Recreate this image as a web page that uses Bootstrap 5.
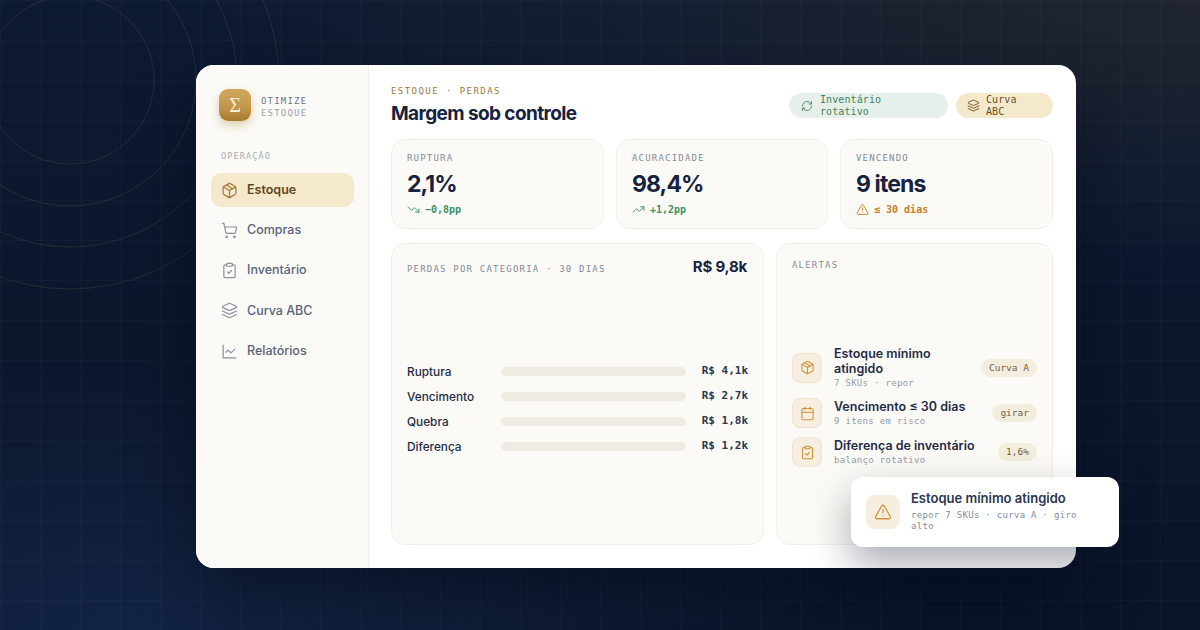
<!DOCTYPE html>
<html lang="pt-BR">
<head>
  <meta charset="UTF-8">
  <title>Otimize Estoque</title>
  <link rel="stylesheet" href="https://cdn.jsdelivr.net/npm/bootstrap@5.3.0/dist/css/bootstrap.min.css">
  <style>
    body {
      width: 1200px; height: 630px; overflow: hidden; position: relative;
      font-family: Inter, "Liberation Sans", sans-serif; color: #16233f;
      background-color: #0b1630;
      background-image:
        linear-gradient(rgba(255,255,255,.022) 1px, transparent 1px),
        linear-gradient(90deg, rgba(255,255,255,.022) 1px, transparent 1px),
        radial-gradient(1000px 260px at 100% 0, #20252f 0%, rgba(32,37,47,0) 100%),
        radial-gradient(800px 280px at 12% 100%, #122444 0%, rgba(18,36,68,0) 100%),
        linear-gradient(180deg, #0d1a33 0%, #0b1429 100%);
      background-size: 40px 40px, 40px 40px, auto, auto, auto;
    }
    .mono { font-family: "DejaVu Sans Mono", "Liberation Mono", monospace; }
    .rings { position: absolute; left: 0; top: 0; }
    .shell {
      position: relative; width: 880px; height: 503px; margin: 65px 0 0 196px;
      border-radius: 18px; background: #fff; box-shadow: 0 30px 70px rgba(3,8,20,.45);
    }
    .side { width: 173px; background: #fbfaf6; border-right: 1px solid #f3efe6; border-radius: 18px 0 0 18px; padding: 24px 14px 0 15px; }
    .brand-mark {
      width: 32px; height: 32px; border-radius: 9px; margin-left: 8px;
      background: linear-gradient(180deg, #d0a85c 0%, #c2964a 60%, #a67a2d 100%);
      box-shadow: 0 4px 10px rgba(166,122,45,.35);
      color: #fbf3dc; font: 20px/32px "Liberation Serif", serif; text-align: center;
    }
    .brand-text { font-size: 9px; line-height: 12px; letter-spacing: 1.2px; color: #6b7488; margin-left: 10px; padding-top: 3px; }
    .brand-text span { color: #9aa1af; display: block; }
    .side-label { font-size: 8.5px; letter-spacing: 1.15px; color: #a9adb5; margin: 30px 0 12px 10px; line-height: 10px; }
    .side .nav { gap: 6.3px; }
    .side .nav-link {
      display: flex; align-items: center; gap: 9px; height: 34px; padding: 0 10px; border-radius: 10px;
      font-size: 12.5px; font-weight: 500; color: #5a6478;
    }
    .side .nav-link.active { background: #f5e9cd; color: #5f4520; font-weight: 600; }
    .side .nav-link svg { width: 17px; height: 17px; color: #8b92a1; }
    .side .nav-link.active svg { color: #a0793a; }
    .ico { fill: none; stroke: currentColor; stroke-width: 1.7; stroke-linecap: round; stroke-linejoin: round; flex: none; }
    .board { padding: 20px 23px 23px 22px; min-width: 0; }
    .eyebrow { font-size: 9px; letter-spacing: 1.45px; color: #9a7a3e; line-height: 11px; padding-top: 1px; }
    .headline { font-size: 19px; font-weight: 700; letter-spacing: -.6px; line-height: 24px; margin: 5px 0 0; color: #16233f; }
    .chip {
      display: flex; align-items: center; height: 25px; border-radius: 13px;
      font-size: 10px; line-height: 11.5px; letter-spacing: .1px; font-weight: 400; white-space: normal; text-align: left;
    }
    .chip-green { width: 159px; gap: 7px; padding: 0 12px; background: #e7efea; color: #3b8560; }
    .chip-green svg { width: 12px; height: 12px; }
    .chip-gold { width: 97px; gap: 6px; padding: 0 20px 0 11px; background: #f5e9cd; color: #6a4e20; }
    .chip-gold svg { width: 13px; height: 13px; }
    .tile { background: #fbfaf6; border: 1px solid #f3efe6; border-radius: 14px; }
    .kpis { display: grid; grid-template-columns: 213px 212px 213px; gap: 12px; margin-top: 13px; }
    .kpi { height: 90px; padding: 13px 15px; }
    .tile-label { font-size: 9px; line-height: 11px; letter-spacing: 1.2px; color: #838a99; }
    .kpi-value { font-size: 23px; font-weight: 700; letter-spacing: -.9px; line-height: 30px; margin-top: 5px; color: #16233f; }
    .kpi-delta { display: flex; align-items: center; gap: 5px; font-size: 10px; line-height: 12px; font-weight: 700; margin-top: 4px; }
    .kpi-delta svg { width: 13px; height: 13px; }
    .good { color: #3c9163; }
    .warn { color: #c67f24; }
    .panels { display: grid; grid-template-columns: 373px 277px; gap: 12px; margin-top: 14px; }
    .panel { height: 302px; padding: 16px 15px; position: relative; }
    .panel-head { margin-top: -2px; }
    .panel-head .tile-label { padding-top: 4px; }
    .panel-total { font-size: 15px; font-weight: 700; letter-spacing: -.2px; line-height: 18px; color: #16233f; margin-right: 1px; }
    .loss-rows { margin-top: 88px; display: flex; flex-direction: column; gap: 7px; }
    .loss-row { display: flex; align-items: center; height: 18px; font-size: 11.8px; font-weight: 500; color: #1f2c47; }
    .loss-name { width: 94px; }
    .track { width: 185px; height: 9px; border-radius: 5px; background: #efece4; margin-bottom: 3px; }
    .loss-val { margin-left: auto; margin-bottom: 3px; font-size: 11px; font-weight: 700; color: #2a3650; }
    .alert-list { margin-top: 75px; display: flex; flex-direction: column; gap: 9px; }
    .alert-row { display: flex; align-items: center; gap: 12px; }
    .alert-ico {
      width: 30px; height: 30px; border-radius: 8px; background: #f6efe0; border: 1px solid #f0e3cb; color: #d0923a;
      display: flex; align-items: center; justify-content: center; flex: none;
    }
    .alert-ico svg { width: 15px; height: 15px; }
    .alert-title { font-size: 12.5px; font-weight: 600; line-height: 15px; color: #1f2c47; }
    .alert-sub { font-size: 9px; line-height: 12px; letter-spacing: .3px; color: #969ba6; margin-top: 1px; }
    .tag {
      margin-left: auto; flex: none; background: #f3eddd; color: #6e6245; border-radius: 10px; height: 18px; padding: 0 8px;
      font-size: 9.5px; line-height: 18px; font-weight: 400;
    }
    .notice {
      position: absolute; left: 655px; top: 412px; width: 268px; height: 70px; border-radius: 12px; background: #fff;
      display: flex; align-items: center; gap: 11px; padding: 0 15px 2px;
      box-shadow: 0 18px 40px rgba(10,20,40,.35);
    }
    .notice-ico { width: 34px; height: 34px; border-radius: 9px; background: #f6efe0; color: #d0923a; display: flex; align-items: center; justify-content: center; flex: none; margin-top: 2px; }
    .notice-ico svg { width: 18px; height: 18px; }
    .notice-title { font-size: 13px; font-weight: 600; line-height: 15px; color: #2a3650; }
    .notice-sub { font-size: 9px; line-height: 10.5px; letter-spacing: .3px; color: #858b98; margin-top: 4px; }
  </style>
</head>
<body>
  <svg width="0" height="0" class="position-absolute">
    <symbol id="i-box" viewBox="0 0 24 24"><path d="M21 8a2 2 0 0 0-1-1.73l-7-4a2 2 0 0 0-2 0l-7 4A2 2 0 0 0 3 8v8a2 2 0 0 0 1 1.73l7 4a2 2 0 0 0 2 0l7-4A2 2 0 0 0 21 16Z"/><path d="m3.3 7 8.7 5 8.7-5"/><path d="M12 22V12"/><path d="m7.5 4.3 9 5.2"/></symbol>
    <symbol id="i-cart" viewBox="0 0 24 24"><circle cx="8" cy="21" r="1"/><circle cx="19" cy="21" r="1"/><path d="M2.05 2.05h2l2.66 12.42a2 2 0 0 0 2 1.58h9.78a2 2 0 0 0 1.95-1.57l1.65-7.43H5.12"/></symbol>
    <symbol id="i-check" viewBox="0 0 24 24"><rect x="8" y="2" width="8" height="4" rx="1"/><path d="M16 4h2a2 2 0 0 1 2 2v14a2 2 0 0 1-2 2H6a2 2 0 0 1-2-2V6a2 2 0 0 1 2-2h2"/><path d="m9 14 2 2 4-4"/></symbol>
    <symbol id="i-layers" viewBox="0 0 24 24"><path d="M12.83 2.18a2 2 0 0 0-1.66 0L2.6 6.08a1 1 0 0 0 0 1.83l8.58 3.91a2 2 0 0 0 1.66 0l8.58-3.9a1 1 0 0 0 0-1.83Z"/><path d="m22 17.65-9.17 4.16a2 2 0 0 1-1.66 0L2 17.65"/><path d="m22 12.65-9.17 4.16a2 2 0 0 1-1.66 0L2 12.65"/></symbol>
    <symbol id="i-chart" viewBox="0 0 24 24"><path d="M3 3v18h18"/><path d="m19 9-5 5-4-4-3 3"/></symbol>
    <symbol id="i-sync" viewBox="0 0 24 24"><path d="M3 12a9 9 0 0 1 9-9 9.75 9.75 0 0 1 6.74 2.74L21 8"/><path d="M21 3v5h-5"/><path d="M21 12a9 9 0 0 1-9 9 9.75 9.75 0 0 1-6.74-2.74L3 16"/><path d="M8 16H3v5"/></symbol>
    <symbol id="i-down" viewBox="0 0 24 24"><path d="m22 17-8.5-8.5-5 5L2 7"/><path d="M16 17h6v-6"/></symbol>
    <symbol id="i-up" viewBox="0 0 24 24"><path d="m22 7-8.5 8.5-5-5L2 17"/><path d="M16 7h6v6"/></symbol>
    <symbol id="i-warn" viewBox="0 0 24 24"><path d="m21.73 18-8-14a2 2 0 0 0-3.48 0l-8 14A2 2 0 0 0 4 21h16a2 2 0 0 0 1.73-3"/><path d="M12 9v4"/><path d="M12 17h.01"/></symbol>
    <symbol id="i-cal" viewBox="0 0 24 24"><rect x="3" y="4" width="18" height="18" rx="2"/><path d="M16 2v4"/><path d="M8 2v4"/><path d="M3 10h18"/></symbol>
  </svg>

  <!-- aneis decorativos do fundo -->
  <svg class="rings" width="400" height="400" fill="none" stroke="#d8a84a" stroke-opacity=".13">
    <circle cx="70" cy="80" r="84"/>
    <circle cx="70" cy="80" r="126"/>
    <circle cx="70" cy="80" r="167"/>
    <circle cx="70" cy="80" r="209"/>
  </svg>

  <div class="shell d-flex">
    <aside class="side flex-shrink-0">
      <div class="d-flex align-items-center">
        <div class="brand-mark">Σ</div>
        <div class="brand-text mono">OTIMIZE<span>ESTOQUE</span></div>
      </div>
      <div class="side-label mono">OPERAÇÃO</div>
      <nav class="nav flex-column">
        <a class="nav-link active" href="#"><svg class="ico"><use href="#i-box"/></svg>Estoque</a>
        <a class="nav-link" href="#"><svg class="ico"><use href="#i-cart"/></svg>Compras</a>
        <a class="nav-link" href="#"><svg class="ico"><use href="#i-check"/></svg>Inventário</a>
        <a class="nav-link" href="#"><svg class="ico"><use href="#i-layers"/></svg>Curva ABC</a>
        <a class="nav-link" href="#"><svg class="ico"><use href="#i-chart"/></svg>Relatórios</a>
      </nav>
    </aside>

    <main class="board flex-grow-1">
      <div class="d-flex justify-content-between align-items-start">
        <div>
          <div class="eyebrow mono">ESTOQUE · PERDAS</div>
          <h1 class="headline">Margem sob controle</h1>
        </div>
        <div class="d-flex gap-2 mt-2">
          <span class="chip chip-green mono"><svg class="ico"><use href="#i-sync"/></svg>Inventário rotativo</span>
          <span class="chip chip-gold mono"><svg class="ico"><use href="#i-layers"/></svg>Curva ABC</span>
        </div>
      </div>

      <div class="kpis">
        <div class="tile kpi">
          <div class="tile-label mono">RUPTURA</div>
          <div class="kpi-value">2,1%</div>
          <div class="kpi-delta mono good"><svg class="ico"><use href="#i-down"/></svg>−0,8pp</div>
        </div>
        <div class="tile kpi">
          <div class="tile-label mono">ACURACIDADE</div>
          <div class="kpi-value">98,4%</div>
          <div class="kpi-delta mono good"><svg class="ico"><use href="#i-up"/></svg>+1,2pp</div>
        </div>
        <div class="tile kpi">
          <div class="tile-label mono">VENCENDO</div>
          <div class="kpi-value">9 itens</div>
          <div class="kpi-delta mono warn"><svg class="ico"><use href="#i-warn"/></svg>≤ 30 dias</div>
        </div>
      </div>

      <div class="panels">
        <section class="tile panel">
          <div class="panel-head d-flex justify-content-between align-items-center">
            <div class="tile-label mono">PERDAS POR CATEGORIA · 30 DIAS</div>
            <div class="panel-total">R$ 9,8k</div>
          </div>
          <div class="loss-rows">
            <div class="loss-row"><span class="loss-name">Ruptura</span><span class="track"></span><span class="loss-val mono">R$ 4,1k</span></div>
            <div class="loss-row"><span class="loss-name">Vencimento</span><span class="track"></span><span class="loss-val mono">R$ 2,7k</span></div>
            <div class="loss-row"><span class="loss-name">Quebra</span><span class="track"></span><span class="loss-val mono">R$ 1,8k</span></div>
            <div class="loss-row"><span class="loss-name">Diferença</span><span class="track"></span><span class="loss-val mono">R$ 1,2k</span></div>
          </div>
        </section>
        <section class="tile panel">
          <div class="tile-label mono">ALERTAS</div>
          <div class="alert-list">
            <div class="alert-row">
              <div class="alert-ico"><svg class="ico"><use href="#i-box"/></svg></div>
              <div><div class="alert-title">Estoque mínimo atingido</div><div class="alert-sub mono">7 SKUs · repor</div></div>
              <span class="tag mono">Curva A</span>
            </div>
            <div class="alert-row">
              <div class="alert-ico"><svg class="ico"><use href="#i-cal"/></svg></div>
              <div><div class="alert-title">Vencimento ≤ 30 dias</div><div class="alert-sub mono">9 itens em risco</div></div>
              <span class="tag mono">girar</span>
            </div>
            <div class="alert-row">
              <div class="alert-ico"><svg class="ico"><use href="#i-check"/></svg></div>
              <div><div class="alert-title">Diferença de inventário</div><div class="alert-sub mono">balanço rotativo</div></div>
              <span class="tag mono">1,6%</span>
            </div>
          </div>
        </section>
      </div>
    </main>

    <div class="notice">
      <div class="notice-ico"><svg class="ico"><use href="#i-warn"/></svg></div>
      <div>
        <div class="notice-title">Estoque mínimo atingido</div>
        <div class="notice-sub mono">repor 7 SKUs · curva A · giro alto</div>
      </div>
    </div>
  </div>

  <script src="https://cdn.jsdelivr.net/npm/bootstrap@5.3.0/dist/js/bootstrap.bundle.min.js"></script>
</body>
</html>
